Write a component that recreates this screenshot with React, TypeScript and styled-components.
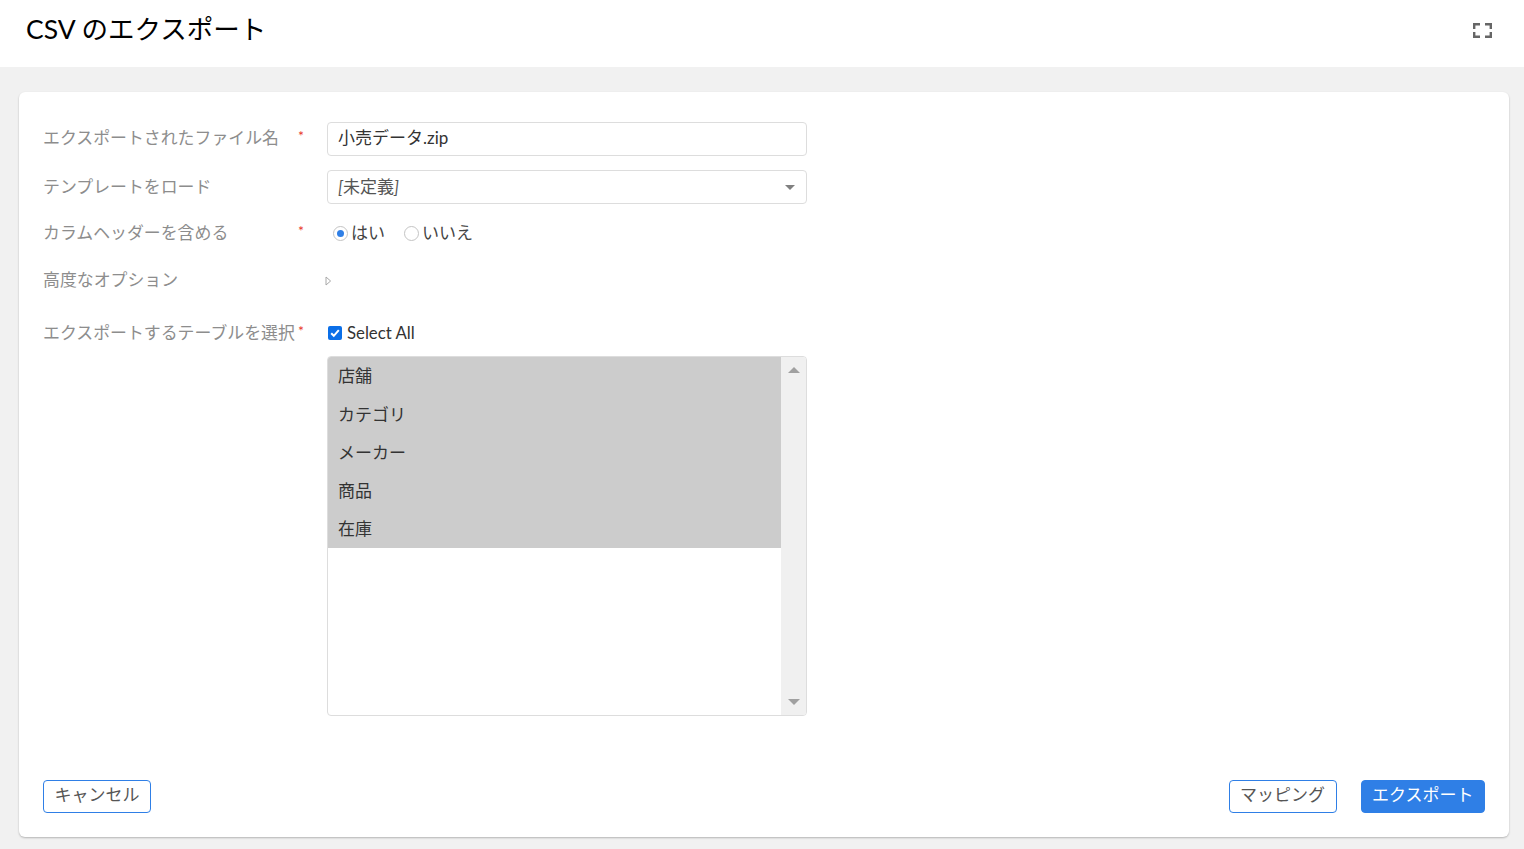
import React from "react";
import styled, { createGlobalStyle } from "styled-components";

const Global = createGlobalStyle`
  html, body { margin: 0; padding: 0; height: 100%; background: #f1f1f1; overflow: hidden; }
  body { font-family: Lato, "Noto Sans CJK JP", sans-serif; font-size: 16px; color: #333; }
  * { box-sizing: border-box; }
`;

const Page = styled.div`
  width: 1524px;
  height: 849px;
  display: flex;
  flex-direction: column;
  background: #f1f1f1;
`;
const Header = styled.header`
  height: 67px;
  flex: none;
  background: #fff;
  display: flex;
  align-items: flex-start;
  justify-content: space-between;
  padding: 12px 32px 0 26px;
`;
const Title = styled.h1`
  margin: 0;
  font-size: 26.5px;
  line-height: 34px;
  font-weight: 400;
  color: #000;
`;
const ExpandButton = styled.span`
  display: block;
  width: 19px;
  height: 15px;
  margin-top: 11px;
  color: #666;
  svg { display: block; }
`;
const Main = styled.main`
  flex: 1;
  padding: 25px 15px 12px 19px;
  display: flex;
  min-height: 0;
`;
const Card = styled.section`
  flex: 1;
  background: #fff;
  border-radius: 6px;
  box-shadow: 0 1px 2px rgba(0, 0, 0, 0.25);
  padding: 30px 24px 24px;
  display: flex;
  flex-direction: column;
`;
const Form = styled.div`
  display: flex;
  flex-direction: column;
  flex: 1;
`;
const Row = styled.div<{ $h: number; $mb: number }>`
  display: grid;
  grid-template-columns: 284px 480px;
  height: ${(p) => p.$h}px;
  margin-bottom: ${(p) => p.$mb}px;
  align-items: center;
`;
const TopRow = styled.div`
  display: grid;
  grid-template-columns: 284px 480px;
  align-items: start;
`;
const Label = styled.label<{ $req?: boolean; $lift?: boolean }>`
  position: relative;
  display: block;
  font-size: 16.9px;
  line-height: 24px;
  color: #8d8d8d;
  white-space: nowrap;
  margin-bottom: ${(p) => (p.$lift ? "2px" : "0")};
  ${(p) =>
    p.$req
      ? `&::after { content: "*"; position: absolute; left: 255px; top: -2px; color: #e8342a; font-size: 14px; }`
      : ""}
`;
const Field = styled.div`
  position: relative;
  height: 34px;
  border: 1px solid #ddd;
  border-radius: 4px;
  padding: 0 10px;
  display: flex;
  align-items: center;
  font-size: 17px;
  color: #333;
  background: #fff;
`;
const TextValue = styled.span`
  line-height: 30px;
  margin-top: -2px;
`;
const PlainValue = styled.span`
  line-height: 30px;
  color: #555;
`;
const Bracket = styled.i`
  font-style: italic;
`;
const Caret = styled.span`
  position: absolute;
  right: 11px;
  top: 14px;
  width: 0;
  height: 0;
  border-left: 5px solid transparent;
  border-right: 5px solid transparent;
  border-top: 5px solid #808080;
`;
const Radios = styled.div`
  display: flex;
  align-items: center;
  padding-left: 6px;
  font-size: 17px;
  color: #444;
`;
const Radio = styled.span<{ $on?: boolean }>`
  width: 15px;
  height: 15px;
  flex: none;
  border-radius: 50%;
  border: 1px solid #c4c4c4;
  background: #fff;
  display: flex;
  align-items: center;
  justify-content: center;
  margin-right: 3px;
  &::after {
    content: "";
    display: ${(p) => (p.$on ? "block" : "none")};
    width: 7px;
    height: 7px;
    border-radius: 50%;
    background: #2f7fe6;
  }
`;
const RadioText = styled.span`
  margin-right: 19px;
  line-height: 24px;
`;
const Disclosure = styled.span`
  display: block;
  width: 7px;
  height: 10px;
  margin-left: -2px;
  margin-top: 2px;
  color: #a8a8a8;
  svg { display: block; }
`;
const CheckRow = styled.div`
  display: flex;
  align-items: center;
  height: 24px;
  font-size: 16.8px;
  color: #333;
  margin-bottom: 11px;
`;
const CheckText = styled.span`
  margin-top: -2px;
`;
const CheckBox = styled.span`
  width: 14px;
  height: 14px;
  margin: 0 5px 0 1px;
  border-radius: 2px;
  background: #0b6fe8;
  display: flex;
  align-items: center;
  justify-content: center;
`;
const ListBox = styled.div`
  height: 360px;
  border: 1px solid #ddd;
  border-radius: 4px;
  display: flex;
  overflow: hidden;
`;
const Options = styled.ul`
  flex: 1;
  margin: 0;
  padding: 0;
  list-style: none;
`;
const Option = styled.li`
  height: 38.2px;
  padding: 0 10px 2.5px;
  display: flex;
  align-items: center;
  background: #cccccc;
  font-size: 17px;
  color: #333;
`;
const Scrollbar = styled.div`
  width: 25px;
  background: #f0f0f0;
  display: flex;
  flex-direction: column;
  justify-content: space-between;
  align-items: center;
  padding: 10px 0 10px;
`;
const ArrowUp = styled.span`
  width: 0;
  height: 0;
  border-left: 6px solid transparent;
  border-right: 6px solid transparent;
  border-bottom: 6px solid #a0a0a0;
`;
const ArrowDown = styled.span`
  width: 0;
  height: 0;
  border-left: 6px solid transparent;
  border-right: 6px solid transparent;
  border-top: 6px solid #a0a0a0;
`;
const Footer = styled.footer`
  display: flex;
  align-items: center;
  justify-content: space-between;
  flex: none;
`;
const Actions = styled.div`
  display: flex;
  gap: 24px;
`;
const Button = styled.button<{ $primary?: boolean }>`
  height: 33px;
  padding: 0 10.5px 4px;
  border: 1px solid #2f7fe6;
  border-radius: 4px;
  background: ${(p) => (p.$primary ? "#2f7fe6" : "#fff")};
  color: ${(p) => (p.$primary ? "#fff" : "#555")};
  font-family: inherit;
  font-size: 17px;
  line-height: 24px;
  white-space: nowrap;
`;

export default function App() {
  return (
    <Page>
      <Global />
      <Header>
        <Title>CSV のエクスポート</Title>
        <ExpandButton>
          <svg width="19" height="15" viewBox="0 0 19 15" fill="none" stroke="currentColor" strokeWidth="2.4">
            <path d="M1.2 6V1.2H7M12 1.2h5.8V6M17.8 9v4.8H12M7 13.8H1.2V9" />
          </svg>
        </ExpandButton>
      </Header>
      <Main>
        <Card>
          <Form>
            <Row $h={34} $mb={14}>
              <Label $req $lift>エクスポートされたファイル名</Label>
              <Field>
                <TextValue>小売データ.zip</TextValue>
              </Field>
            </Row>
            <Row $h={34} $mb={17}>
              <Label>テンプレートをロード</Label>
              <Field>
                <PlainValue>
                  <Bracket>[</Bracket>未定義<Bracket>]</Bracket>
                </PlainValue>
                <Caret />
              </Field>
            </Row>
            <Row $h={24} $mb={23}>
              <Label $req>カラムヘッダーを含める</Label>
              <Radios>
                <Radio $on />
                <RadioText>はい</RadioText>
                <Radio />
                <RadioText>いいえ</RadioText>
              </Radios>
            </Row>
            <Row $h={24} $mb={29}>
              <Label>高度なオプション</Label>
              <Disclosure>
                <svg width="7" height="10" viewBox="0 0 7 10" fill="none" stroke="currentColor">
                  <path d="M1 1l4.6 4L1 9z" />
                </svg>
              </Disclosure>
            </Row>
            <TopRow>
              <Label $req>エクスポートするテーブルを選択</Label>
              <div>
                <CheckRow>
                  <CheckBox>
                    <svg width="10" height="10" viewBox="0 0 10 10" fill="none" stroke="#fff" strokeWidth="2">
                      <path d="M1.2 5.2l2.6 2.6L8.8 2.2" />
                    </svg>
                  </CheckBox>
                  <CheckText>Select All</CheckText>
                </CheckRow>
                <ListBox>
                  <Options>
                    <Option>店舗</Option>
                    <Option>カテゴリ</Option>
                    <Option>メーカー</Option>
                    <Option>商品</Option>
                    <Option>在庫</Option>
                  </Options>
                  <Scrollbar>
                    <ArrowUp />
                    <ArrowDown />
                  </Scrollbar>
                </ListBox>
              </div>
            </TopRow>
          </Form>
          <Footer>
            <Button>キャンセル</Button>
            <Actions>
              <Button>マッピング</Button>
              <Button $primary>エクスポート</Button>
            </Actions>
          </Footer>
        </Card>
      </Main>
    </Page>
  );
}
